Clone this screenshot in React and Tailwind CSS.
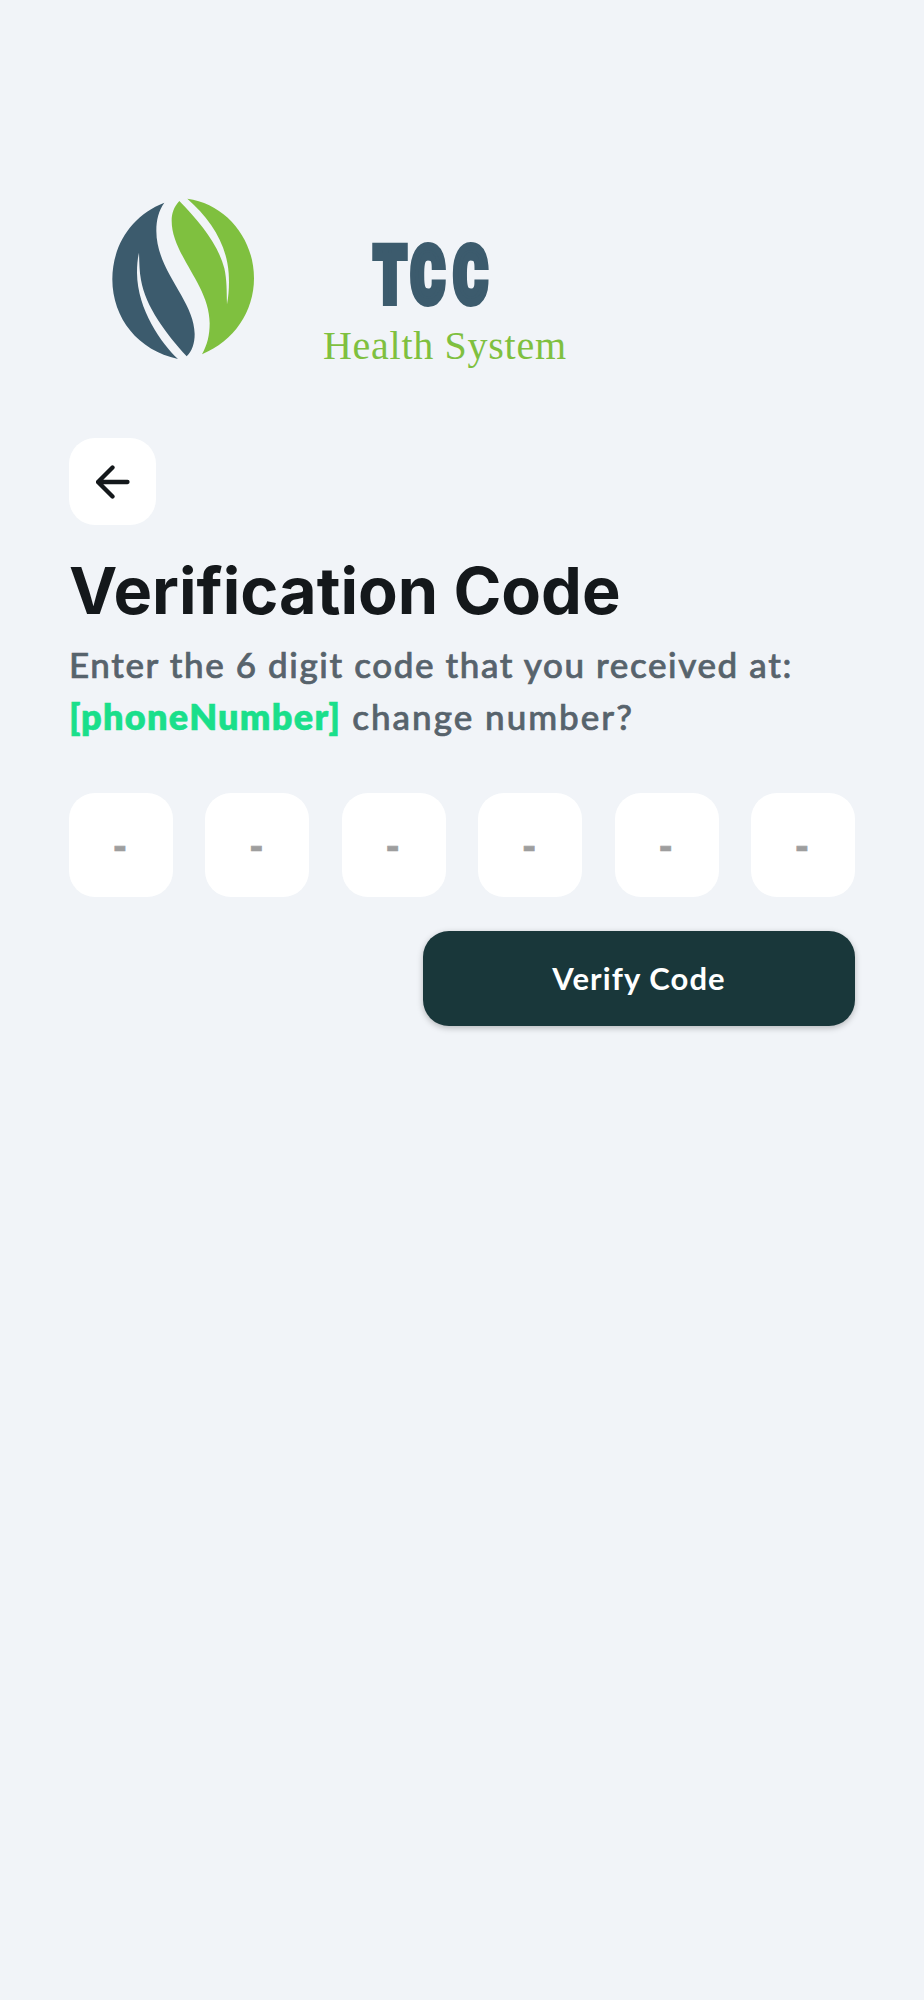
import { useState } from "react";

const CODE_LENGTH = 6;

function LeafMark() {
  return (
    <svg viewBox="0 0 510 540" className="w-[170px] h-[180px]">
      {/* left leaf, split by its vein */}
      <path
        fill="#3c5b6d"
        d="M193 38C95 76 37 166 37 268C37 385 115 482 234 507C185 460 112 360 111 248C111 225 113 206 117 188C118 218 118 243 123 270C137 350 197 430 260 499C276 483 284 460 284 432C283 330 169 245 169 122C169 90 176 62 193 38Z"
      />
      {/* right leaf */}
      <path
        fill="#7fc03f"
        d="M262 26C378 42 462 145 462 265C462 365 402 454 306 493C322 465 329 435 329 400C329 285 215 195 215 92C215 70 222 50 238 33C300 96 355 165 373 235C381 272 380 305 381 343C387 310 388 280 386 250C380 160 330 86 262 26Z"
      />
    </svg>
  );
}

function Logo() {
  return (
    <div className="flex items-start gap-10">
      <LeafMark />
      <svg viewBox="0 0 270 160" className="mt-[30px] w-[270px] h-[160px]">
        <text
          transform="translate(64 82) scale(0.66 1)"
          x="0 56 121"
          y="0"
          fill="#3c5b6d"
          stroke="#3c5b6d"
          strokeWidth="8"
          className="font-[Roboto] font-black text-[77px]"
        >
          TCC
        </text>
        <text
          x="13"
          y="138.500"
          textLength="243"
          fill="#7fc03f"
          className="font-['Liberation_Serif'] text-[40px]"
        >
          Health System
        </text>
      </svg>
    </div>
  );
}

export default function App() {
  // one entry for every digit box
  const [code, setCode] = useState(Array(CODE_LENGTH).fill(""));

  function handleChange(event, index) {
    const next = [...code];
    next[index] = event.target.value;
    setCode(next);
  }

  function handleSubmit(event) {
    event.preventDefault();
  }

  return (
    <div className="min-h-screen bg-[#f1f4f8] pt-[190px] px-[69px] font-[Lato,sans-serif]">
      <div className="ml-[31px]">
        <Logo />
      </div>

      <button
        type="button"
        aria-label="Back"
        className="mt-[58px] flex size-[87px] items-center justify-center rounded-[26px] bg-white"
      >
        <svg
          viewBox="0 0 34 34"
          className="size-[34px]"
          fill="none"
          stroke="#14181b"
          strokeWidth="4.300"
          strokeLinecap="round"
          strokeLinejoin="round"
        >
          <path d="M31.500 17H2.500M16.500 2.500L2 17L16.500 31.500" />
        </svg>
      </button>

      <h1 className="mt-[26px] whitespace-nowrap font-[Inter,sans-serif] text-[64.800px] font-bold leading-[80px] text-[#14181b]">
        Verification Code
      </h1>
      <p className="mt-[7px] whitespace-nowrap text-[35px] font-medium leading-[52px] tracking-[1.600px] text-[#57636c] [-webkit-text-stroke:0.700px_#57636c]">
        Enter the 6 digit code that you received at:
        <br />
        <span className="text-[36px] font-extrabold tracking-[1.300px] text-[#1adf8b] [-webkit-text-stroke:0.500px_#1adf8b]">
          [phoneNumber]
        </span>
        <span className="tracking-[2px]"> change number?</span>
      </p>

      <form onSubmit={handleSubmit} className="mt-[51px]">
        <div className="flex justify-between">
          {code.map((digit, index) => (
            <input
              key={index}
              type="text"
              maxLength={1}
              placeholder="-"
              value={digit}
              onChange={(event) => handleChange(event, index)}
              className="size-[104px] rounded-[26px] bg-white pr-0.5 text-center font-['Liberation_Sans',sans-serif] text-[40px] font-bold text-[#14181b] placeholder:text-[#9e9e9e] placeholder:[-webkit-text-stroke:0.700px_#9e9e9e]"
            />
          ))}
        </div>
        <button
          type="submit"
          className="ml-auto mt-[34px] flex h-[95px] w-[432px] items-center justify-center rounded-[26px] bg-[#19373a] text-[31px] font-bold tracking-[1.100px] text-white shadow-[0_2px_6px_rgba(0,0,0,0.25)]"
        >
          Verify Code
        </button>
      </form>
    </div>
  );
}
